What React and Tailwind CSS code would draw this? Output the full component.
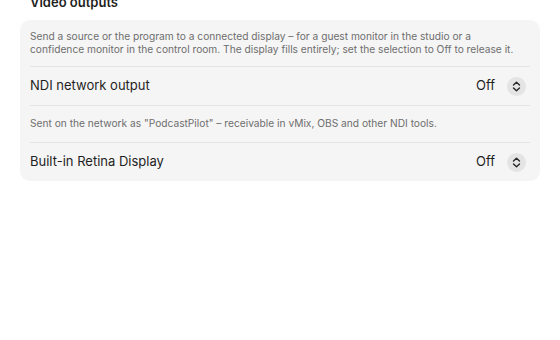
const font = { fontFamily: "Inter, 'Noto Sans', sans-serif" };

function Stepper() {
  return (
    <button className="ml-3 mr-1 flex h-[19px] w-[19px] items-center justify-center rounded-full bg-[#e4e4e4]">
      <svg width="9" height="11" viewBox="0 0 9 11" fill="none">
        <path d="M1.5 4 L4.5 1.2 L7.5 4" stroke="#262626" strokeWidth="1.4" strokeLinecap="round" strokeLinejoin="round" />
        <path d="M1.5 7 L4.5 9.8 L7.5 7" stroke="#262626" strokeWidth="1.4" strokeLinecap="round" strokeLinejoin="round" />
      </svg>
    </button>
  );
}

function SelectRow({ label }) {
  return (
    <div className="flex h-[38px] items-center justify-between">
      <span className="text-[13px] text-[#1f1f1f]">{label}</span>
      <div className="flex items-center">
        <span className="text-[13px] text-[#1f1f1f]">Off</span>
        <Stepper />
      </div>
    </div>
  );
}

export default function App() {
  return (
    <div className="min-h-[340px] bg-white px-5" style={font}>
      <h2 className="-mt-[5px] mb-[10px] pl-2.5 text-[13px] font-semibold leading-[15px] text-[#1f1f1f]">
        Video outputs
      </h2>
      <div className="rounded-[10px] bg-[#f5f5f5] px-2.5">
        <p className="py-[10px] text-[10.2px] leading-[13px] text-[#6e6e6e]">
          Send a source or the program to a connected display – for a guest monitor in the studio or a
          <br />
          confidence monitor in the control room. The display fills entirely; set the selection to Off to release it.
        </p>
        <div className="border-t border-[#e4e4e4]">
          <SelectRow label="NDI network output" />
        </div>
        <div className="flex h-[37px] items-center border-t border-[#e4e4e4]">
          <p className="text-[10.2px] text-[#6e6e6e]">
            Sent on the network as "PodcastPilot" – receivable in vMix, OBS and other NDI tools.
          </p>
        </div>
        <div className="border-t border-[#e4e4e4]">
          <SelectRow label="Built-in Retina Display" />
        </div>
      </div>
    </div>
  );
}
